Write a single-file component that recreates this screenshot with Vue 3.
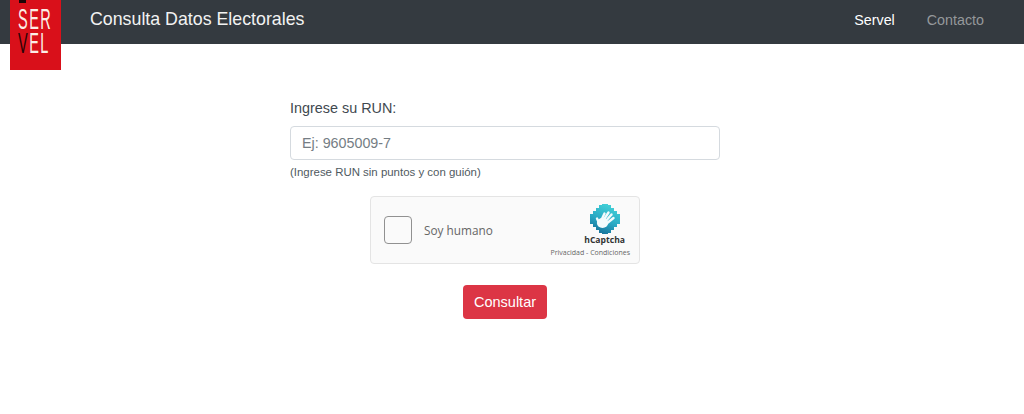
<script setup>
import { ref } from "vue";

const run = ref("");
const navLinks = [
  { label: "Servel", active: true },
  { label: "Contacto", active: false },
];
const fingers = [
  "M11 17 14.5 9.5",
  "M13 17 18.5 8.5",
  "M15 18 21.5 10.5",
  "M16 20 23.5 14",
];
</script>

<template>
  <div class="page">
    <header class="navbar">
      <div class="logo">
        <span class="logo-mark"></span>
        <span class="logo-line">SER</span>
        <span class="logo-line"><b>V</b>EL</span>
      </div>
      <a class="brand">Consulta Datos Electorales</a>
      <nav class="links">
        <a
          v-for="item in navLinks"
          :key="item.label"
          :class="['link', { active: item.active }]"
          >{{ item.label }}</a
        >
      </nav>
    </header>

    <main class="form">
      <label class="label" for="run">Ingrese su RUN:</label>
      <input id="run" v-model="run" class="input" type="text" placeholder="Ej: 9605009-7" />
      <small class="help">(Ingrese RUN sin puntos y con guión)</small>

      <div class="captcha">
        <span class="check"></span>
        <span class="human">Soy humano</span>
        <div class="captcha-brand">
          <svg class="hc-icon" width="30" height="30" viewBox="0 0 30 30">
            <defs>
              <linearGradient id="hcGrad" x1="0.7" y1="0" x2="0.3" y2="1">
                <stop offset="0" stop-color="#45d3d8" />
                <stop offset="0.55" stop-color="#2aa9c4" />
                <stop offset="1" stop-color="#166f98" />
              </linearGradient>
            </defs>
            <path
              fill="url(#hcGrad)"
              d="M12 0h6v1h3v3h3v3h3v3h3v10h-3v3h-3v3h-3v3h-3v1h-6v-1H9v-3H6v-3H3v-3H0V10h3V7h3V4h3V1h3Z"
            />
            <g stroke="#f4fbfc" stroke-width="2.4" stroke-linecap="round" fill="none">
              <path v-for="d in fingers" :key="d" :d="d" />
              <path d="M7 14.5 9.5 20" />
            </g>
            <ellipse cx="12.5" cy="19" rx="5.6" ry="5" fill="#f4fbfc" />
          </svg>
          <span class="hc-name">hCaptcha</span>
          <span class="hc-terms">Privacidad - Condiciones</span>
        </div>
      </div>

      <button class="submit" type="button">Consultar</button>
    </main>
  </div>
</template>

<style scoped>
.page {
  position: relative;
  height: 414px;
  background: #fff;
  font-family: "Liberation Sans", Arial, sans-serif;
  color: #212529;
  overflow: hidden;
}
.navbar {
  display: flex;
  align-items: center;
  height: 44px;
  padding: 0 40px 5px 90px;
  box-sizing: border-box;
  background: #343a40;
}
.logo {
  position: absolute;
  left: 10px;
  top: 0;
  width: 51px;
  height: 70px;
  background: #d9101a;
  color: #fbeee6;
  font-size: 29px;
  line-height: 24px;
  padding: 7px 0 0 8px;
  box-sizing: border-box;
}
.logo-mark {
  position: absolute;
  left: 9px;
  top: 0;
  width: 7px;
  height: 3px;
  background: #1a0506;
}
.logo-line {
  display: block;
  transform: scaleX(0.5);
  transform-origin: left center;
  white-space: nowrap;
  letter-spacing: 3px;
}
.logo-line b {
  font-weight: 400;
  color: #2a0406;
}
.brand {
  font-size: 17.8px;
  color: #f2f2f2;
}
.links {
  display: flex;
  gap: 32px;
  margin-left: auto;
}
.link {
  font-size: 14.3px;
  color: #94989b;
}
.link.active {
  color: #fff;
}
.form {
  display: flex;
  flex-direction: column;
  width: 430px;
  margin-left: 290px;
  padding-top: 55px;
}
.label {
  font-size: 14.4px;
  line-height: 18px;
  color: #3f4950;
  margin-bottom: 9px;
}
.input {
  height: 34px;
  box-sizing: border-box;
  padding: 0 11px;
  border: 1px solid #d5dadf;
  border-radius: 4px;
  font-family: inherit;
  font-size: 14.3px;
  color: #495057;
  outline: none;
}
.input::placeholder {
  color: #757d84;
  opacity: 1;
}
.help {
  margin-top: 5px;
  font-size: 11.45px;
  line-height: 15px;
  color: #4f5a61;
}
.captcha {
  display: flex;
  align-items: center;
  align-self: center;
  width: 270px;
  height: 68px;
  box-sizing: border-box;
  margin-top: 16px;
  padding: 0 9px 0 13px;
  background: #fafafa;
  border: 1px solid #e4e4e4;
  border-radius: 4px;
}
.check {
  width: 28px;
  height: 28px;
  box-sizing: border-box;
  background: #fafafa;
  border: 1px solid #919191;
  border-radius: 4px;
}
.human {
  margin-left: 12px;
  font-family: "Open Sans", sans-serif;
  font-size: 11.8px;
  color: #666;
}
.captcha-brand {
  display: flex;
  flex-direction: column;
  align-items: flex-end;
  margin-left: auto;
}
.hc-icon {
  display: block;
  margin-right: 10px;
}
.hc-name {
  margin-right: 5px;
  font-family: "Open Sans", sans-serif;
  font-size: 8.6px;
  line-height: 12px;
  font-weight: 700;
  color: #333;
}
.hc-terms {
  margin-top: 2px;
  font-family: "Open Sans", sans-serif;
  font-size: 7px;
  line-height: 9px;
  color: #666;
  white-space: nowrap;
}
.submit {
  align-self: center;
  width: 84px;
  height: 34px;
  margin-top: 21px;
  border: none;
  border-radius: 4px;
  background: #dc3545;
  color: #fff;
  font-family: inherit;
  font-size: 14.5px;
}
</style>
